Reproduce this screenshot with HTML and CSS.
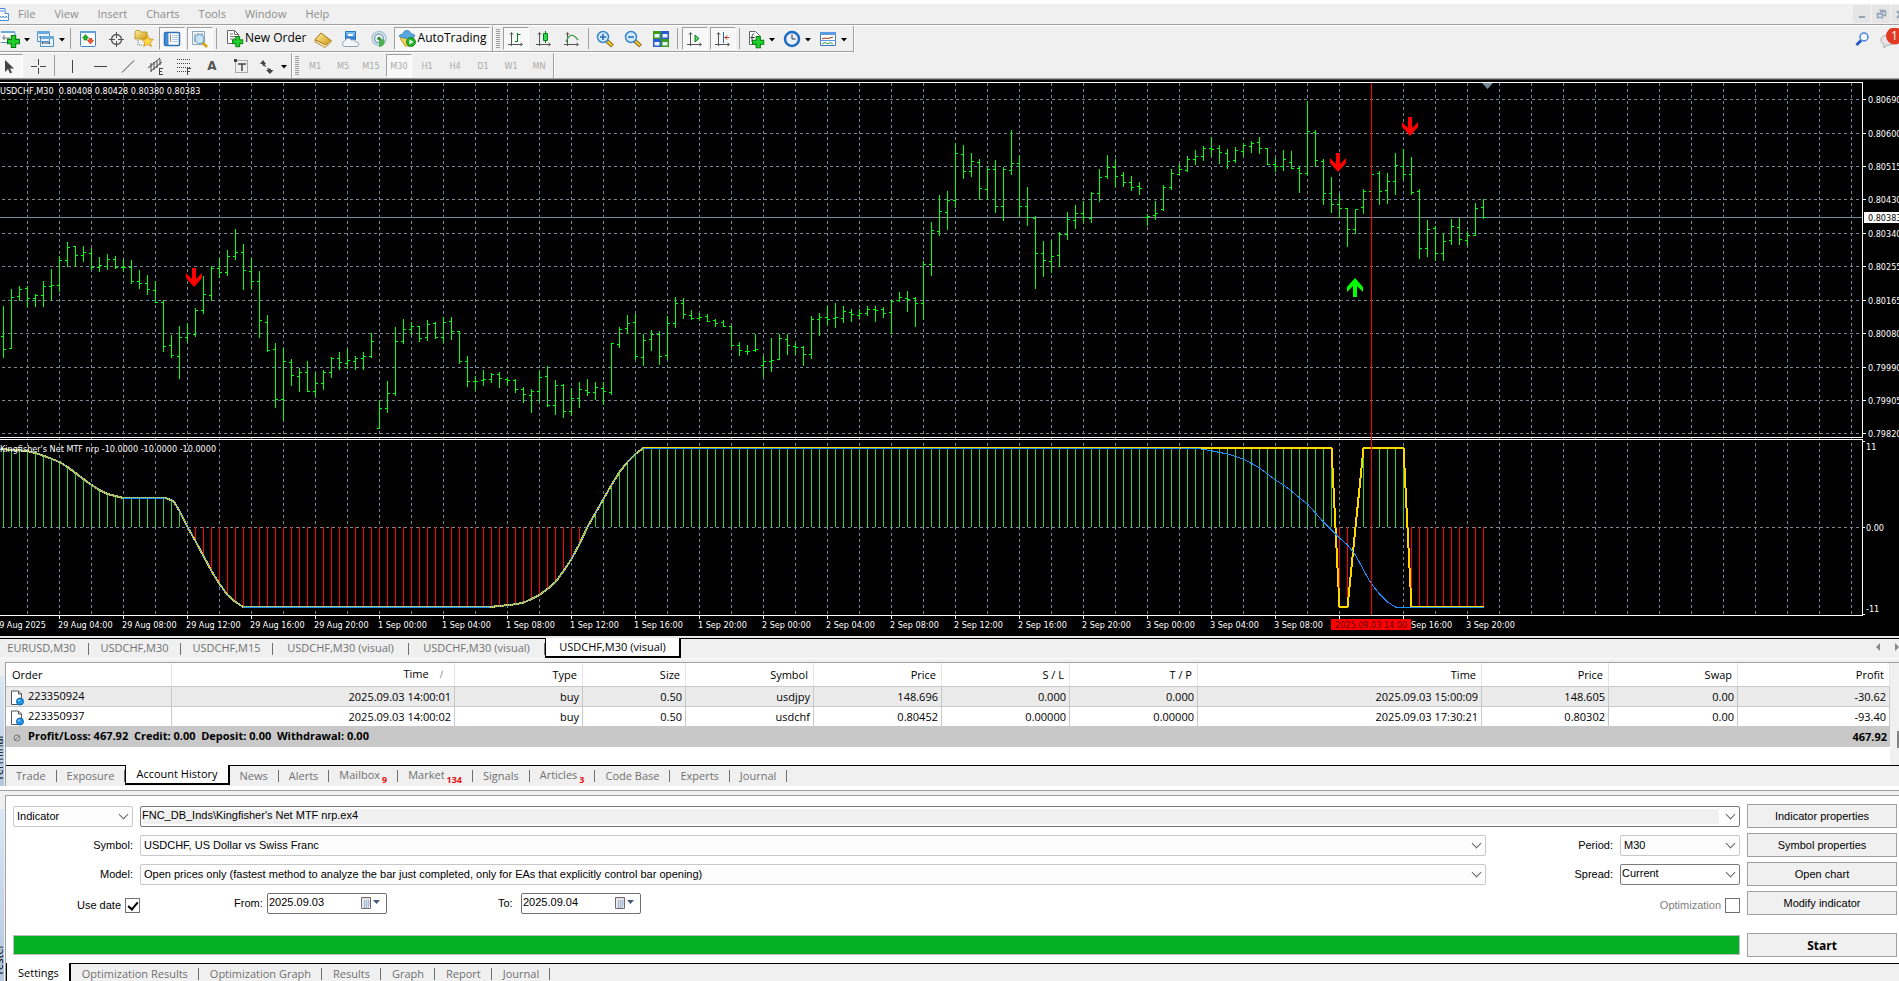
FILE: index.html
```html
<!DOCTYPE html>
<html lang="en">
<head>
<meta charset="utf-8">
<title>USDCHF,M30 (visual)</title>
<link rel="stylesheet" href="styles.css">
</head>
<body>
<svg class="defs" aria-hidden="true">
  <defs>
    <linearGradient id="gold" x1="0" y1="0" x2="1" y2="1"><stop offset="0" stop-color="#fff0a0"/><stop offset="1" stop-color="#d09a10"/></linearGradient>
    <linearGradient id="sky" x1="0" y1="0" x2="0" y2="1"><stop offset="0" stop-color="#8ecbf5"/><stop offset="1" stop-color="#1b6fd0"/></linearGradient>
    <symbol id="plus" viewBox="0 0 12 12"><path d="M4 .5h4V4h3.500v4H8v3.500H4V8H.5V4H4z" fill="#1fd02a" stroke="#067a10"/></symbol>
    <symbol id="axes" viewBox="0 0 18 18"><path d="M4.500 3v13M1 14.500h14M3 4.500l1.500-2L6 4.500M13.500 13l2 1.500-2 1.500" fill="none" stroke="#555"/></symbol>
    <symbol id="lens" viewBox="0 0 18 18"><path d="M11 11l5.500 5" stroke="#8a6a10" stroke-width="4"/><path d="M11 11l5 4.500" stroke="#f0cc40" stroke-width="2"/><circle cx="7" cy="7" r="5.500" fill="#cfeaff" stroke="#3b86c8" stroke-width="1.500"/></symbol>
    <symbol id="doc" viewBox="0 0 14 16"><path d="M1.500 1h7l3 3v10.500h-10z" fill="#fff" stroke="#555"/><path d="M8.500 1v3h3" fill="none" stroke="#555"/><circle cx="10" cy="11.500" r="3.500" fill="#1d95e5" stroke="#1266ae"/><circle cx="9" cy="10.500" r="1" fill="#a8dcff"/></symbol>
    <symbol id="cal" viewBox="0 0 22 16"><path d="M2.500 2.500h9v11h-9z" fill="#f4f6f8" stroke="#756a6a"/><path d="M3 3h8v1.500H3z" fill="#ddd"/><path d="M4 6h7M4 8h7M4 10h7M4 12h5M5.500 5v8M7.500 5v8M9.500 5v8" stroke="#9fb2cc" stroke-width=".8"/><path d="M14 5h7l-3.500 4z" fill="#455a80"/></symbol>
  </defs>
</svg>

<header class="menubar">
  <svg class="app-icon" width="9" height="16" viewBox="0 0 9 16"><path d="M-1 2.500h6v5h3.500v7H-1z" fill="#fff" stroke="#4a8ae0"/><path d="M0 10l1.500 2L3 10l1.500 2L6 10l1.500 2M0 5h4" fill="none" stroke="#4a8ae0"/></svg>
  <nav class="menus"><button>File</button><button>View</button><button>Insert</button><button>Charts</button><button>Tools</button><button>Window</button><button>Help</button></nav>
  <div class="winbtns">
    <button aria-label="Minimize"><svg width="18" height="18"><path d="M6 11h6v2H6z" fill="#93a5b6"/></svg></button>
    <button aria-label="Restore"><svg width="18" height="18"><path d="M8 6.500h5.500v4H11M7.500 5.500h6M5.500 8.500h5v4h-5zM5 9h6" fill="none" stroke="#93a5b6" stroke-width="1.500"/></svg></button>
    <button aria-label="Close"><svg width="18" height="18"><path d="M6 6l6 7M12 6l-6 7" stroke="#93a5b6" stroke-width="2"/></svg></button>
  </div>
</header>

<div class="bars">
<div class="toolrow">
<div class="toolbar main">
  <button class="tb drop first" aria-label="New chart"><svg width="30" height="22" viewBox="0 0 30 22"><path d="M-2 4.500h16v10H-2z" fill="#fff" stroke="#4f8fc4"/><path d="M-2 3h16v2H-2z" fill="#6aa9dc"/><path d="M3 7v5M1 10h8" stroke="#777"/><use href="#plus" x="6" y="7" width="13" height="13"/><path d="M23 10h6l-3 3.500z"/></svg></button>
  <button class="tb drop" aria-label="Profiles"><svg width="34" height="22" viewBox="0 0 34 22"><path d="M4.500 3.500h12v10h-12zM7.500 8.500h13v10h-13z" fill="#e8f4ff" stroke="#4f8fc4"/><path d="M4 3h13v3H4zM9 8h12v3H8z" fill="#6aa9dc"/><path d="M7 10v-2M10 15h7M10 14l-1 1 1 1M16 14l1 1-1 1" stroke="#456" fill="none"/><path d="M26 10h6l-3 3.500z"/></svg></button>
  <i class="sep wide"></i>
  <button class="tb" aria-label="Market Watch"><svg width="18" height="18" viewBox="0 0 18 18"><rect x="1.500" y="1.500" width="15" height="15" rx="1" fill="#fff" stroke="#3d87cf"/><path d="M1 1h16v2H1z" fill="#5fa3e0"/><path d="M6.500 4.500l3 3.500H8v2H5V8H3.500z" fill="#28b428" stroke="#0a7a0a" stroke-width=".6"/><path d="M11.500 14l-3-3.500H10v-2h3v2h1.500z" fill="#ff5a3c" stroke="#b82010" stroke-width=".6"/></svg></button>
  <button class="tb" aria-label="Data Window"><svg width="18" height="18" viewBox="0 0 18 18"><circle cx="9.500" cy="9.500" r="5" fill="none" stroke="#555" stroke-width="1.300"/><path d="M9.500 2v6M9.500 11v6M2 9.500h6M11 9.500h6" stroke="#555"/></svg></button>
  <button class="tb" aria-label="Navigator"><svg width="20" height="18" viewBox="0 0 20 18"><path d="M1 2l1-1.500h3.500L7 2h6v7H1z" fill="url(#gold)" stroke="#b18a20" stroke-width=".8"/><path d="M4 10v5h5" stroke="#777" stroke-dasharray="1 1" fill="none"/><path d="M13.500 5l1.800 4 4 .4-3 2.800 1 4.300-3.800-2.300L9.700 16.500l1-4.300-3-2.800 4-.4z" fill="#ffd848" stroke="#c88a10" stroke-width=".8"/></svg></button>
  <button class="tb on" aria-label="Terminal"><svg width="18" height="18" viewBox="0 0 18 18"><rect x="1.500" y="2.500" width="15" height="13" rx="1" fill="#fff" stroke="#2c70b8" stroke-width="1.500"/><path d="M2 3h3.500v12H2z" fill="#3f8ad2"/><path d="M7 5h1M7 11h1" stroke="#c00"/><path d="M7 7h1M7 9h1" stroke="#000"/><path d="M9 5.500h6M9 7.500h6M9 9.500h6M9 11.500h6" stroke="#a9cbe8"/></svg></button>
  <button class="tb on" aria-label="Strategy Tester"><svg width="20" height="18" viewBox="0 0 20 18"><path d="M2.500 1.500h12v13h-12z" fill="#f2f5f8" stroke="#8ab"/><path d="M5 4v8M8 3v8M12 3v6" stroke="#789"/><path d="M12 12l5 5" stroke="#d8a820" stroke-width="3"/><circle cx="9.500" cy="9" r="4.500" fill="#c8e4fa" fill-opacity=".85" stroke="#6a9cc8" stroke-width="1.200"/></svg></button>
  <i class="sep"></i>
  <button class="tb label order"><svg width="19" height="20" viewBox="0 0 19 20"><path d="M2.500 2.500h7l4 4v9h-11z" fill="#fff" stroke="#666"/><path d="M9.500 2.500v4h4M5 6h3M5 8.500h6M5 11h6" fill="none" stroke="#777"/><use href="#plus" x="7" y="8" width="11.500" height="11.500"/></svg><span>New Order</span></button>
  <button class="tb" aria-label="MetaEditor"><svg width="18" height="18" viewBox="0 0 18 18"><path d="M1 9.500L7 3l10 7.500-5 5z" fill="url(#gold)" stroke="#a87310"/><path d="M1 10v2l10 5.500 6-5.500v-2l-5 5z" fill="#f6ecc0" stroke="#a87310" stroke-width=".8"/></svg></button>
  <button class="tb" aria-label="Community"><svg width="18" height="18" viewBox="0 0 18 18"><path d="M3.500 1.500h10v8h-10z" fill="url(#sky)" stroke="#2478c8"/><path d="M6 4h5v2H6z" fill="#fff"/><path d="M2 16.500a3 3 0 01.5-5.500 4 4 0 017-1 3.500 3.500 0 014.500 2 2.300 2.300 0 011 4.500z" fill="#f2f6fa" stroke="#8fa3b5"/></svg></button>
  <button class="tb" aria-label="Signals"><svg width="18" height="18" viewBox="0 0 18 18"><circle cx="9" cy="8.500" r="7" fill="none" stroke="#a9c5d8" stroke-width="1.500"/><circle cx="9" cy="8.500" r="4.500" fill="none" stroke="#7aa7c8" stroke-width="1.500"/><path d="M9 8v9c4 0 6-3 5.500-7z" fill="#4caf50"/><circle cx="9" cy="8.500" r="1.800" fill="#2e8b3a"/></svg></button>
  <button class="tb label on auto"><svg width="19" height="18" viewBox="0 0 19 18"><path d="M2 9l7-2 7 2-4 8H7z" fill="#f2cf52" stroke="#b08818" stroke-width=".8"/><path d="M1 7c1-2 3-1 4-2 0-4 7-5 8 0 2 0 3 0 4 2-4 3-12 3-16 0z" fill="#58a8e0" stroke="#2a78b8" stroke-width=".8"/><circle cx="13" cy="13" r="4.500" fill="#22b428" stroke="#0a7c10" stroke-width=".8"/><path d="M11.500 10.500l4 2.500-4 2.500z" fill="#fff"/></svg><span>AutoTrading</span></button>
  <i class="edge"></i><i class="grip"></i>
  <button class="tb on" aria-label="Bar Chart"><svg width="18" height="18"><use href="#axes"/><path d="M10.500 3v9M8 11.500h2.500M10.500 4.500h3" stroke="#0a7a1a"/></svg></button>
  <button class="tb" aria-label="Candlesticks"><svg width="18" height="18"><use href="#axes"/><path d="M10.500 1v12" stroke="#0a6a1a"/><path d="M8.500 3.500h4v7h-4z" fill="#2fdc4a" stroke="#0a7a1a"/></svg></button>
  <button class="tb" aria-label="Line Chart"><svg width="18" height="18"><use href="#axes"/><path d="M3 12c3-8 7-9 12-2" fill="none" stroke="#3a9a4a" stroke-width="1.300"/></svg></button>
  <i class="sep"></i>
  <button class="tb" aria-label="Zoom In"><svg width="18" height="18"><use href="#lens"/><path d="M4 7h6M7 4v6" stroke="#2a6cb0" stroke-width="1.500"/></svg></button>
  <button class="tb" aria-label="Zoom Out"><svg width="18" height="18"><use href="#lens"/><path d="M4 7h6" stroke="#2a6cb0" stroke-width="1.500"/></svg></button>
  <button class="tb" aria-label="Tile Windows"><svg width="18" height="18"><path d="M1 1h8v8H1zM9 9h8v8H9z" fill="#3a9a1c"/><path d="M9 1h8v8H9zM1 9h8v8H1z" fill="#2a5ad0"/><path d="M2.500 4h5v3.500h-5zM10.500 4h5v3.500h-5zM2.500 12h5v3.500h-5zM10.500 12h5v3.500h-5z" fill="#eaf4ff"/></svg></button>
  <i class="sep wide"></i>
  <button class="tb on" aria-label="Auto Scroll"><svg width="18" height="18"><use href="#axes"/><path d="M9 5l4 3.500L9 12z" fill="#4ce06a" stroke="#0a7a1a"/></svg></button>
  <button class="tb on" aria-label="Chart Shift"><svg width="18" height="18"><use href="#axes"/><path d="M9.500 2v11" stroke="#2a6cb0"/><path d="M11 7.500h4M13 5.500l-2 2 2 2" fill="none" stroke="#c03010"/></svg></button>
  <i class="sep wide"></i>
  <button class="tb drop" aria-label="Indicators"><svg width="34" height="22" viewBox="0 0 34 22"><path d="M5.500 3.500h6l4 4v9h-10z" fill="#fff" stroke="#666"/><path d="M10 6c-2 0-2 1-2 8M6.500 9.500h4" fill="none" stroke="#333"/><use href="#plus" x="8" y="8" width="12.500" height="12.500"/><path d="M25 10h6l-3 3.500z"/></svg></button>
  <button class="tb drop" aria-label="Periods"><svg width="34" height="22" viewBox="0 0 34 22"><circle cx="12" cy="11" r="7" fill="#eaf1f8" stroke="#1f6cc4" stroke-width="2.500"/><path d="M12 6.500V11h3.500" fill="none" stroke="#333"/><path d="M25 10h6l-3 3.500z"/></svg></button>
  <button class="tb drop" aria-label="Templates"><svg width="34" height="22" viewBox="0 0 34 22"><path d="M4.500 4.500h15v13h-15z" fill="#fff" stroke="#3d7cc0"/><path d="M4 4h16v3H4z" fill="#5a9ae0"/><path d="M4 12.500h16" stroke="#5a9ae0"/><path d="M6 11l3-1 3 .5L17 9" fill="none" stroke="#a03018"/><path d="M6 16l3-1.500 3 1.500 2-1.500 3 1.500" fill="none" stroke="#2a9a4a"/><path d="M25 10h6l-3 3.500z"/></svg></button>
</div>
<div class="right-tools">
  <button aria-label="Search"><svg width="15" height="15"><path d="M1.500 13L6 8.500" stroke="#2458c8" stroke-width="3"/><circle cx="9" cy="5" r="4" fill="#f4f8ff" stroke="#4a80d8" stroke-width="1.500"/></svg></button>
  <button aria-label="Notifications"><svg width="19" height="22"><path d="M8 7c-4 0-7 2-7 5 0 2 1 3.500 3 4.500V20l3-3c6 0 9-2 9-5s-3-5-8-5z" fill="#e6e6ea" stroke="#aaa"/><circle cx="14.500" cy="8" r="8.500" fill="#e23a20"/><text x="11" y="12" class="badge">1</text></svg></button>
</div>
</div>

<div class="toolbar second">
  <button class="tb on cursor" aria-label="Cursor"><svg width="18" height="18"><path d="M5 3v12l3-3 2 4.500 2-1-2-4h4z" fill="#444"/></svg></button>
  <button class="tb" aria-label="Crosshair"><svg width="18" height="18"><path d="M9.500 2v6M9.500 11v6M2 9.500h6M11 9.500h6" stroke="#444"/></svg></button>
  <i class="sep wide"></i>
  <button class="tb" aria-label="Vertical Line"><svg width="18" height="18"><path d="M9.500 3v13" stroke="#444"/></svg></button>
  <button class="tb" aria-label="Horizontal Line"><svg width="18" height="18"><path d="M3 9.500h13" stroke="#444"/></svg></button>
  <button class="tb" aria-label="Trendline"><svg width="18" height="18"><path d="M3 15.500L15 3.500" stroke="#444"/></svg></button>
  <button class="tb" aria-label="Channel"><svg width="18" height="18"><path d="M1 11L13 1M4 14L15 5M4 6v9M7 5v8M10 4v7M13 2v6" stroke="#444" fill="none"/><path d="M12.500 11v6.500M12 11.500h4M12 14.500h3M12 17.500h4" stroke="#444"/></svg></button>
  <button class="tb" aria-label="Fibonacci"><svg width="18" height="18"><path d="M2 2.500h14M2 6.500h14M2 10.500h14M2 14.500h9" stroke="#444" stroke-dasharray="1 1"/><path d="M12.500 11v7M12 11.500h4M12 14.500h3" stroke="#444"/></svg></button>
  <button class="tb glyph" aria-label="Text">A</button>
  <button class="tb" aria-label="Text Label"><svg width="18" height="18"><rect x="4.500" y="3.500" width="12" height="12" fill="none" stroke="#666" stroke-dasharray="1 1"/><path d="M3 2h3v3H3z" fill="#444"/><path d="M7 7h8M11 7v7" stroke="#444" stroke-width="1.500"/></svg></button>
  <button class="tb drop" aria-label="Arrows"><svg width="34" height="22" viewBox="0 0 34 22"><path d="M8 5l3 4H9.500l2 3-4-1.500V9H5z" fill="#444"/><path d="M15 19l-4-4h2l-1-2 4 1v1h2.500z" fill="#444"/><path d="M26 10h6l-3 3.500z"/></svg></button>
  <i class="edge"></i><i class="grip"></i>
  <button class="tb tf">M1</button><button class="tb tf">M5</button><button class="tb tf">M15</button><button class="tb tf on">M30</button><button class="tb tf">H1</button><button class="tb tf">H4</button><button class="tb tf">D1</button><button class="tb tf">W1</button><button class="tb tf">MN</button>
</div>
</div>

<main class="chart">
  <svg id="plot" class="plot"></svg>
  <svg id="axis" class="axis"></svg>
</main>
<div class="chart-edge"></div>

<nav class="tabs chart-tabs">
  <button>EURUSD,M30</button><button>USDCHF,M30</button><button>USDCHF,M15</button><button class="long">USDCHF,M30 (visual)</button><button class="long">USDCHF,M30 (visual)</button><button class="long active">USDCHF,M30 (visual)</button>
  <svg class="scroller" width="24" height="10"><path d="M5 1v8L1 5z" fill="#888"/><path d="M20 1v8l4-4z" fill="#888"/></svg>
</nav>

<section class="dock terminal">
  <div class="spine"><span>Terminal</span></div>
  <div class="pane">
    <div class="scrollbox">
    <table>
      <colgroup><col class="c166"><col><col class="c128"><col class="c103"><col class="c128"><col class="c128"><col class="c128"><col class="c128"><col class="c284"><col class="c127"><col class="c129"><col class="c152"></colgroup>
      <thead><tr><th class="l">Order</th><th>Time<span class="sort">/</span></th><th>Type</th><th>Size</th><th>Symbol</th><th>Price</th><th>S / L</th><th>T / P</th><th>Time</th><th>Price</th><th>Swap</th><th>Profit</th></tr></thead>
      <tbody>
        <tr class="odd"><td class="l"><svg width="14" height="16"><use href="#doc"/></svg>223350924</td><td>2025.09.03 14:00:01</td><td>buy</td><td>0.50</td><td>usdjpy</td><td>148.696</td><td>0.000</td><td>0.000</td><td>2025.09.03 15:00:09</td><td>148.605</td><td>0.00</td><td>-30.62</td></tr>
        <tr><td class="l"><svg width="14" height="16"><use href="#doc"/></svg>223350937</td><td>2025.09.03 14:00:02</td><td>buy</td><td>0.50</td><td>usdchf</td><td>0.80452</td><td>0.00000</td><td>0.00000</td><td>2025.09.03 17:30:21</td><td>0.80302</td><td>0.00</td><td>-93.40</td></tr>
        <tr class="sum"><td class="l" colspan="11"><svg width="14" height="16"><circle cx="7" cy="8" r="3" fill="#ccc" stroke="#777"/><path d="M5 10l4-4" stroke="#777"/></svg>Profit/Loss: 467.92&nbsp; Credit: 0.00&nbsp; Deposit: 0.00&nbsp; Withdrawal: 0.00</td><td>467.92</td></tr>
      </tbody>
    </table>
    <div class="scrollbar"><i></i></div>
    </div>
    <nav class="tabs">
      <button>Trade</button><button>Exposure</button><button class="active">Account History</button><button>News</button><button>Alerts</button><button>Mailbox<sub>9</sub></button><button>Market<sub>134</sub></button><button>Signals</button><button>Articles<sub>3</sub></button><button>Code Base</button><button>Experts</button><button>Journal</button>
    </nav>
  </div>
</section>

<section class="dock tester">
  <div class="spine"><span>Tester</span></div>
  <div class="pane">
    <form class="settings">
      <div class="combo"><select aria-label="Type"><option>Indicator</option></select></div>
      <div class="combo file strong"><select aria-label="File"><option>FNC_DB_Inds\Kingfisher's Net MTF nrp.ex4</option></select></div>
      <button type="button">Indicator properties</button>

      <label for="symbol">Symbol:</label>
      <div class="combo"><select id="symbol"><option>USDCHF, US Dollar vs Swiss Franc</option></select></div>
      <label for="period">Period:</label>
      <div class="combo"><select id="period"><option>M30</option></select></div>
      <button type="button">Symbol properties</button>

      <label for="model">Model:</label>
      <div class="combo"><select id="model"><option>Open prices only (fastest method to analyze the bar just completed, only for EAs that explicitly control bar opening)</option></select></div>
      <label for="spread">Spread:</label>
      <div class="combo strong"><select id="spread"><option>Current</option></select></div>
      <button type="button">Open chart</button>

      <div class="check"><label for="usedate">Use date</label><input type="checkbox" id="usedate" checked></div>
      <div class="dates">
        <label for="from">From:</label><div class="date"><input id="from" value="2025.09.03"><svg width="22" height="16"><use href="#cal"/></svg></div>
        <label for="to">To:</label><div class="date"><input id="to" value="2025.09.04"><svg width="22" height="16"><use href="#cal"/></svg></div>
      </div>
      <div class="check opt"><label for="opt">Optimization</label><input type="checkbox" id="opt"></div>
      <button type="button">Modify indicator</button>

      <div class="progress" role="progressbar" aria-valuenow="100" aria-label="Progress"></div>
      <button type="button" class="start">Start</button>
    </form>
    <nav class="tabs">
      <button class="active">Settings</button><button>Optimization Results</button><button>Optimization Graph</button><button>Results</button><button>Graph</button><button>Report</button><button>Journal</button>
    </nav>
  </div>
</section>
<script src="chart.js"></script>
</body>
</html>
```
FILE: styles.css
```css
* { box-sizing: border-box; }
html { overflow: hidden; }
body {
  margin: 0;
  padding-top: 4px;
  background: #fff;
  color: #000;
  font: 11px/16px "Open Sans", "Noto Sans", sans-serif;
  overflow: hidden;
}
button { border: 0; padding: 0; margin: 0; background: none; font: inherit; color: inherit; }
svg { display: block; flex: none; }
.defs { position: absolute; width: 0; height: 0; }

/* menu */
.menubar { display: flex; height: 22px; background: #f0f0f0; border-bottom: 1px solid #fff; box-shadow: inset 0 -1px #a0a0a0; }
.app-icon { margin-top: 2px; }
.menus { display: flex; gap: 19px; margin-left: 9px; height: 20px; align-items: center; color: #8c8c8c; flex: 1; }
.winbtns { display: flex; gap: 1px; padding-top: 1px; width: 46px; overflow: hidden; }
.winbtns button { background: #e5e5e5; height: 18px; border-radius: 2px; }

/* toolbars */
.bars { background: #f0f0f0; border-bottom: 1px solid #505050; box-shadow: inset 0 -1px #a0a0a0; height: 54px; }
.toolrow { display: flex; justify-content: space-between; }
.toolbar { display: flex; gap: 2px; align-items: center; width: max-content; border-right: 1px solid #a0a0a0; }
.main { height: 27px; border-bottom: 1px solid #fff; box-shadow: inset 0 -1px #a0a0a0, 1px 0 #fff; padding-right: 3px; padding-bottom: 1px; }
.second { height: 25px; padding-right: 1px; box-shadow: 1px 0 #fff; }
.tb { width: 26px; height: 23px; display: flex; align-items: center; justify-content: center; flex: none; border: 1px solid transparent; }
.tb.on { border-color: #a0a0a0 #fff #fff #a0a0a0; background: #f8f8f8; }
.tb.drop { width: 34px; }
.tb.first { width: 31px; justify-content: flex-start; }
.tb.cursor { width: 23px; justify-content: flex-start; border-left: 0; }
.tb.label { font-size: 12px; gap: 1px; padding-bottom: 2px; }
.tb.order { width: 88px; justify-content: flex-start; padding-left: 4px; }
.tb.auto { width: 96px; }
.tb.glyph { font: bold 12px "DejaVu Sans", sans-serif; color: #555; }
.tb.tf { font: 9px "DejaVu Sans Condensed", "DejaVu Sans", sans-serif; color: #aaa; }
.second .drop { width: 34px; }
.sep { width: 3px; height: 21px; background: linear-gradient(#a0a0a0, #a0a0a0) 1px 0 / 1px 100% no-repeat; }
.sep.wide { margin-right: 1px; }
.edge { width: 2px; height: 25px; border-left: 1px solid #a0a0a0; border-right: 1px solid #fff; }
.grip { width: 4px; height: 19px; margin-right: 1px; background: repeating-linear-gradient(#a0a0a0 0 1px, #f0f0f0 1px 2px); }
.right-tools { display: flex; gap: 10px; align-items: center; padding-bottom: 1px; }
.badge { font: 12px "Open Sans", sans-serif; fill: #fff; }

/* chart */
.chart { display: flex; background: #000; height: 556px; }
.plot { flex: 1; min-width: 0; width: 0; height: 556px; overflow: hidden; }
.axis { width: 37px; height: 556px; overflow: hidden; }
.chart text { font: 9px "DejaVu Sans Condensed", "DejaVu Sans", sans-serif; fill: #fff; }
.chart text.dark { fill: #000; }
.chart text.maroon { fill: #600; }
.crisp { shape-rendering: crispEdges; }
.chart-edge { height: 3px; background: #e8e8e8; border-bottom: 1px solid #000; }

/* tabs */
.tabs { display: flex; height: 21px; background: #f0f0f0; border-top: 1px solid #000; color: #707070; }
.tabs button { height: 19px; padding: 0 10px; white-space: nowrap; position: relative; border-right: 1px solid transparent; background: linear-gradient(#707070, #707070) 100% 4px / 1px 12px no-repeat border-box; }
.tabs button.active { background: #fff; color: #000; border: solid #000; border-width: 0 2px 2px 1px; margin-top: -1px; height: 20px; }
.tabs sub { font: bold 9px/9px "Noto Sans", sans-serif; color: #e81010; margin-left: 2px; vertical-align: -4px; }
.chart-tabs { height: 23px; border-top: 0; box-shadow: inset 0 -3px #f0f0f0, inset 0 -4px #fff; }
.chart-tabs button { min-width: 92px; height: 18px; }
.chart-tabs button:first-child { padding: 0 5px 0 0; min-width: 89px; }
.chart-tabs button.long { min-width: 136px; }
.scroller { margin: 3px 0 0 auto; }

/* docked panels */
.dock { display: flex; background: #f0f0f0; }
.spine { width: 4px; flex: none; margin: 14px 1px 0 0; background: linear-gradient(#dbe8f5, #b4c8de); overflow: hidden; display: flex; justify-content: flex-end; }
.spine span { writing-mode: vertical-rl; transform: rotate(180deg); flex: none; padding-top: 5px; margin-right: -3px; }
.pane { flex: 1; min-width: 0; border: solid #a0a0a0; border-width: 1px 0 0 1px; background: #fff; }
.terminal { border-bottom: 1px solid #fff; }
.scrollbox { display: flex; height: 102px; }
.scrollbar { width: 9px; background: #f0f0f0; padding: 68px 0 0 7px; }
.scrollbar i { display: block; height: 17px; background: #858585; }
table { flex: 1; width: 0; align-self: flex-start; table-layout: fixed; border-collapse: separate; border-spacing: 0; }
th, td { text-align: right; font-weight: normal; padding: 0 3px 0 4px; white-space: nowrap; border-right: 1px solid #c8c8c8; border-bottom: 1px solid #c8c8c8; }
th { height: 24px; padding-right: 5px; border-right-color: #e5e5e5; }
td { height: 20px; line-height: 18px; }
.l { text-align: left; }
th.l { padding-left: 6px; }
td.l svg { display: inline-block; vertical-align: middle; margin-right: 4px; }
.odd td { background: #ebebeb; }
.sum td { background: #c8c8c8; font-weight: bold; border-right: 0; }
.sort { margin: 0 6px 0 11px; color: #777; font-size: 9px; }
.c103 { width: 103px; } .c127 { width: 127px; } .c128 { width: 128px; } .c129 { width: 129px; }
.c152 { width: 152px; } .c166 { width: 166px; } .c284 { width: 284px; }

/* tester */
.tester { border-top: 1px solid #a0a0a0; margin-top: 3px; padding-top: 4px; }
.tester .tabs { margin-top: 6px; height: 18px; }
.tester .tabs button { height: 17px; line-height: 20px; padding: 0 10px 0 11px; }
.tester .tabs button.active { height: 18px; border-bottom: 0; }
.settings {
  display: grid;
  grid-template-columns: 120px minmax(0, 1fr) 120px 120px 150px;
  grid-template-rows: repeat(4, 24px) 37px;
  gap: 5px 7px;
  align-items: center;
  padding: 8px 2px 0 7px;
  font: 11px/13px "Liberation Sans", Arial, sans-serif;
}
.settings > label { text-align: right; }
.settings > button { height: 24px; border: 1px solid #a0a0a0; background: #f0f0f0; }
.combo { position: relative; height: 21px; }
.combo select { appearance: none; width: 100%; height: 21px; border: 1px solid #c8c8c8; border-radius: 2px; background: #fdfdfd; font: inherit; color: #000; padding: 0 20px 0 3px; }
.combo.strong select { border-color: #7a7a7a; background: #fff; padding: 0 20px 2px 1px; }
.combo.file select { background: #f0f0f0; box-shadow: inset 0 0 0 2px #fff, inset -20px 0 #fff; }
.combo.file { grid-column: 2 / 5; }
.combo::after { content: ""; position: absolute; right: 6px; top: 5px; width: 6px; height: 6px; border: solid #666; border-width: 0 1px 1px 0; transform: rotate(45deg); }
.check { display: flex; justify-content: flex-end; align-items: center; gap: 4px; padding-top: 4px; margin-right: -7px; }
.check.opt { grid-column: 3 / 5; margin-right: 0; color: #808080; }
.check input, .date input { appearance: none; margin: 0; border: 1px solid #707070; background: #fff; }
.check input { width: 15px; height: 15px; position: relative; }
.check input:checked::after { content: ""; position: absolute; left: 4px; top: 1px; width: 4px; height: 8px; border: solid #000; border-width: 0 2px 2px 0; transform: rotate(40deg); }
.dates { display: flex; align-items: center; padding-left: 94px; }
.dates label { width: 26px; }
.date { position: relative; width: 120px; margin: 0 111px 0 7px; }
.date input { width: 120px; height: 21px; padding: 0 30px 2px 1px; font: inherit; border-radius: 2px; display: block; }
.date svg { position: absolute; right: 6px; top: 2px; }
.dates label + .date + label { width: 16px; }
.progress { grid-column: 1 / 5; height: 20px; margin-top: 13px; background: #06b025; border: 1px solid #bcbcbc; }
.settings > .start { margin-top: 13px; font: bold 12px "Open Sans", sans-serif; }
```
FILE: chart.js
```js
const NS = "http://www.w3.org/2000/svg";
const TOP = 80, STEP = 8, FIRST = 3;

// x index is implicit; each row is high, low, open, close in thirds of a pixel below TOP
const BARS = `678,833,769,808 627,806,805,652 618,660,649,628 618,678,625,655 642,678,655,646 603,678,646,619 567,657,619,616 528,635,616,541
486,559,541,502 498,558,499,526 498,543,526,517 504,568,520,562 531,575,562,556 522,567,559,538 528,566,538,562 538,575,562,562
541,611,562,604 570,624,604,610 585,644,610,628 605,668,631,667 661,815,667,799 766,833,796,826 738,896,829,772 730,788,772,760
685,770,763,691 588,701,691,643 559,660,646,565 535,593,565,577 510,587,577,529 447,537,529,517 492,627,517,571 534,624,574,604
573,773,604,721 705,815,727,811 789,983,808,958 806,1022,958,844 838,917,847,886 864,935,889,877 844,935,877,934 880,949,934,910
870,929,910,877 832,893,877,835 817,869,835,847 807,865,850,841 829,869,844,835 817,869,835,829 759,831,829,784 961,1046,1045,985
904,998,985,940 741,947,940,784 717,791,784,748 727,764,748,739 738,785,739,775 720,782,772,733 726,776,730,772 712,788,772,727
711,779,724,754 754,851,754,844 829,920,844,904 889,932,904,904 870,917,901,898 879,908,898,883 877,923,883,895 891,917,898,901
898,938,901,928 921,968,928,943 928,998,946,934 872,965,934,892 858,980,889,976 901,1004,976,916 912,1013,916,994 925,1007,994,955
906,983,955,928 898,947,931,937 907,959,937,922 907,973,925,934 789,944,937,790 742,803,793,748 706,760,745,730 703,838,727,829
763,857,832,781 750,812,778,763 754,854,763,829 709,838,826,730 651,741,730,670 655,716,670,703 691,719,706,715 700,722,715,712
702,725,709,724 718,740,721,730 721,740,727,739 739,800,739,796 787,827,796,811 796,822,814,814 762,815,811,808 829,888,856,844
774,875,844,841 762,838,838,775 762,824,778,796 790,822,799,802 799,857,802,823 709,836,823,718 700,765,718,712 678,735,712,718
669,743,715,712 679,728,715,694 687,725,697,703 688,716,706,700 679,705,700,688 679,725,688,691 682,713,688,700 661,759,697,664
637,665,661,652 633,695,655,658 652,740,655,670 544,719,670,553 427,587,553,451 345,467,454,394 333,449,397,361 189,383,361,220
195,296,223,274 220,290,274,244 238,359,247,325 262,359,328,268 240,398,268,379 262,422,379,268 150,284,271,250 225,410,250,379
322,437,379,412 409,626,415,520 484,590,520,541 480,578,544,529 457,559,526,463 397,479,463,418 376,446,421,400 363,428,400,412
337,428,415,340 267,365,340,292 226,296,289,262 238,318,262,289 277,320,286,307 289,332,307,322 307,344,319,325 403,437,412,409
364,419,406,400 316,391,388,322 267,329,322,280 252,284,283,268 229,275,271,238 210,254,238,229 199,242,229,205 172,228,205,208
196,251,205,217 208,266,220,244 202,248,241,211 190,228,214,196 183,216,199,190 171,219,187,205 205,254,205,253 234,275,253,259
210,270,259,238 213,266,247,265 259,336,265,280 64,287,280,154 151,260,157,241 237,372,244,340 291,396,340,373 342,411,373,385
385,498,385,448 388,459,448,388 327,399,382,334 280,340,334,283 274,372,280,334 279,371,331,304 219,342,304,256 207,299,259,283
231,342,283,337 327,534,334,505 420,528,505,448 438,540,445,520 460,540,520,484 417,492,481,438 414,494,442,478 454,496,481,466
369,467,466,385 357,416,382,412`.split(/\s+/).map(r => r.split(",").map(v => Math.floor(+v / 3)));

const SLOW = [[0,449],[27,451],[38,454],[49,458],[59,462],[67,467],[75,473],[83,479],[91,485],[99,490],[107,494],[115,496],[123,498],[165,498],
  [173,501],[179,511],[187,527],[195,541],[203,556],[211,571],[219,584],[227,595],[235,602],[243,607],[489,607],[509,605],[522,603],[531,599],
  [539,595],[547,589],[555,582],[563,571],[571,559],[579,544],[587,527],[595,513],[603,499],[611,485],[619,472],[627,462],[635,454],[643,448],[1180,448],
  [1200,449],[1212,451],[1227,454],[1243,459],[1259,468],[1267,474],[1275,480],[1283,485],[1291,491],[1299,498],[1307,504],[1315,513],[1323,522],
  [1331,530],[1339,538],[1347,545],[1355,555],[1363,570],[1371,584],[1379,594],[1387,602],[1395,607],[1483,607]];
const FAST = SLOW.filter(p => p[0] <= 1180).concat([[1331,448],[1339,607],[1347,607],[1363,448],[1403,448],[1411,607],[1483,607]]);

function add(parent, tag, attrs, text) {
  const el = document.createElementNS(NS, tag);
  for (const k in attrs) el.setAttribute(k, attrs[k]);
  if (text) el.textContent = text;
  parent.appendChild(el);
  return el;
}
function group(svg) {
  return add(svg, "g", { transform: `translate(0 ${-TOP})`, fill: "none" });
}
function levelAt(points, x) {
  for (let i = 1; i < points.length; i++) {
    const [x0, y0] = points[i - 1], [x1, y1] = points[i];
    if (x <= x1) return y0 + (y1 - y0) * (x - x0) / (x1 - x0);
  }
  return points[points.length - 1][1];
}

const plot = group(document.getElementById("plot"));
const axis = group(document.getElementById("axis"));
const ROWS = [99, 133, 166, 199, 233, 266, 300, 333, 367, 400, 433];
const PRICES = ["0.80690", "0.80600", "0.80515", "0.80430", "0.80340", "0.80255", "0.80165", "0.80080", "0.79990", "0.79905", "0.79820"];
const END = 3996;

let grid = "", cols = "";
for (const y of ROWS.concat(527)) grid += `M2 ${y}.5H${END}`;
for (let x = 27; x < END; x += 32) cols += `M${x}.5 83V614`;
add(plot, "path", { d: grid + cols, stroke: "#778899", "stroke-dasharray": "3 3", class: "crisp" });
add(plot, "path", { d: `M0 217.5H${END}`, stroke: "#778899", class: "crisp" });

let up = "", down = "";
BARS.forEach((b, i) => {
  const x = FIRST + STEP * i, y = Math.round(levelAt(FAST, x));
  if (y < 524) up += `M${x}.5 ${y}V527`;
  else if (y > 530) down += `M${x}.5 527V${y}`;
});
add(plot, "path", { d: up, stroke: "#32cd32", class: "crisp" });
add(plot, "path", { d: down, stroke: "#ff0000", class: "crisp" });

const path = pts => "M" + pts.map(p => p[0] + ".5 " + p[1]).join("L");
add(plot, "path", { d: path(FAST), stroke: "#ffd700", "stroke-width": 2, class: "crisp" });
add(plot, "path", { d: path(SLOW.filter(p => p[0] <= 643)), stroke: "#4aa8ff", "stroke-width": 2, "stroke-dasharray": "1 1" });
add(plot, "path", { d: "M123 498.500H165M243 607.500H489M643 448.500H1180", stroke: "#1e90ff", class: "crisp" });
add(plot, "path", { d: path(SLOW.filter(p => p[0] >= 1180)), stroke: "#1e90ff", class: "crisp" });

let ohlc = "";
BARS.forEach(([h, l, o, c], i) => {
  const x = FIRST + STEP * i;
  ohlc += `M${x}.5 ${TOP + h}V${TOP + l + 1}M${x - 2} ${TOP + o}.5h2M${x + 1} ${TOP + c}.5h2`;
});
add(plot, "path", { d: ohlc, stroke: "#00ff00", class: "crisp" });

const frame = { stroke: "#ffffff", class: "crisp" };
add(plot, "path", { ...frame, d: `M0 82.500H${END}M0 437.500H${END}M0 439.500H${END}M0 615.500H${END}` });
add(plot, "path", { d: "M1371.500 83V615", stroke: "#ff0000", class: "crisp" });
add(plot, "path", { d: "M1482 83h11l-5.500 6z", fill: "#778899" });

const arrow = "M-2 -10V1L-8 -5V0L0 9L8 0V-5L2 1V-10Z";
for (const [x, y, turn, color] of [[194, 278, 0, "#ff0000"], [1338, 163, 0, "#ff0000"], [1410, 127, 0, "#ff0000"], [1355, 287, 180, "#00ff00"]])
  add(plot, "path", { d: arrow, fill: color, transform: `translate(${x} ${y}) rotate(${turn})` });

add(plot, "text", { x: 0, y: 94 }, "USDCHF,M30\u00a0 0.80408 0.80428 0.80380 0.80383");
add(plot, "text", { x: 0, y: 452 }, "Kingfisher's Net MTF nrp -10.0000 -10.0000 -10.0000");

const DAYS = ["29 Aug", "1 Sep", "2 Sep", "3 Sep"];
add(plot, "text", { x: -6, y: 628 }, "29 Aug 2025");
for (let n = 1, x = 59; n <= 23; n++, x += 64) {
  add(plot, "path", { ...frame, d: `M${x}.5 616V619` });
  const label = `${DAYS[Math.floor(n / 6)]} ${String(n % 6 * 4).padStart(2, "0")}:00`;
  // the cursor's time label takes the place of 12:00 and of the day number of 16:00
  if (n === 22) add(plot, "text", { x: x + 8, y: 628 }, label.slice(2));
  else if (n !== 21) add(plot, "text", { x: x - 1, y: 628 }, label);
}
add(plot, "rect", { x: 1331, y: 619, width: 80, height: 11, fill: "#ff0000" });
add(plot, "text", { x: 1335, y: 628, class: "maroon" }, "2025.09.03 14:00");

add(axis, "path", { ...frame, d: "M.5 82V438M.5 439V616" });
ROWS.forEach((y, i) => {
  add(axis, "path", { ...frame, d: `M1 ${y}.5h3` });
  add(axis, "text", { x: 6, y: y + 4 }, PRICES[i]);
});
add(axis, "rect", { x: 2, y: 212, width: 40, height: 11, fill: "#ffffff" });
add(axis, "text", { x: 6, y: 221, class: "dark" }, "0.80383");
for (const [y, label] of [[446, "11"], [527, "0.00"], [608, "-11"]]) {
  add(axis, "path", { ...frame, d: `M1 ${y === 446 ? 441 : y === 608 ? 614 : y}.5h2` });
  add(axis, "text", { x: 4, y: y + 4 }, label);
}
```
